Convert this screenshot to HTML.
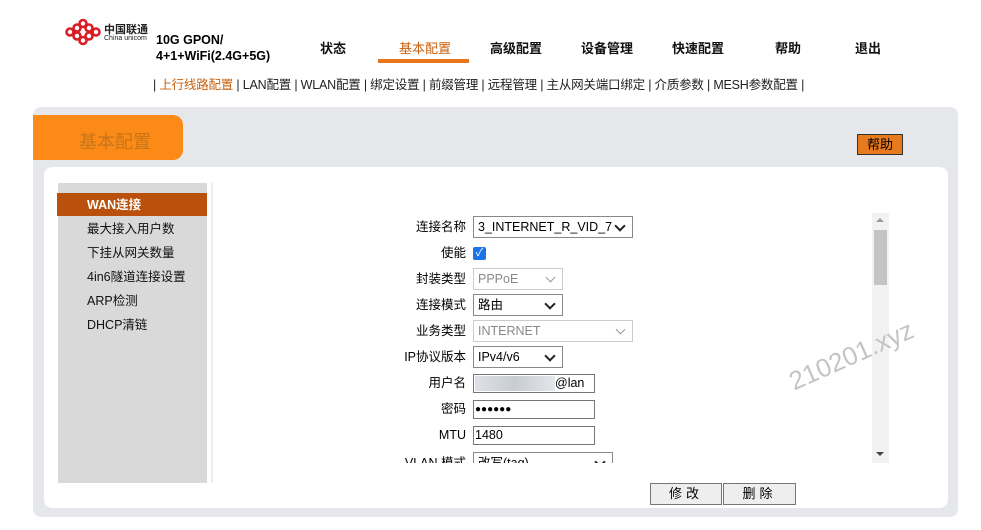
<!DOCTYPE html>
<html><head><meta charset="utf-8"><style>
body{margin:0;width:981px;height:530px;background:#fff;font-family:"Liberation Sans","Noto Sans CJK SC",sans-serif;position:relative;overflow:hidden;font-size:13px;color:#000}
.a{position:absolute}
.nav{top:38px;font-size:13px;font-weight:bold;color:#111}
.sub{top:74px;left:153px;font-size:12.5px;color:#222;white-space:nowrap;letter-spacing:-0.2px}
.lbl{width:120px;text-align:right;font-size:12.5px;line-height:22px;height:22px}
.sel{left:473px;height:22px;border:1px solid #888;box-sizing:border-box;background:#fff;font-size:12.5px;line-height:20px;padding-left:4px}
.sel.dis{border-color:#ccc;color:#888}
.sel:after{content:"";position:absolute;right:8px;top:5px;width:6px;height:6px;border-right:2px solid #222;border-bottom:2px solid #222;transform:rotate(45deg)}
.sel.dis:after{border-color:#999;border-width:1px}
.inp{left:473px;width:122px;height:19px;border:1px solid #777;box-sizing:border-box;font-size:12.5px;line-height:17px;padding-left:1px}
.side{left:87px;font-size:12.5px;color:#111;line-height:16px}
.btn{top:483px;height:22px;width:72px;border:1px solid #777;background:#eee;text-align:center;line-height:20px;font-size:13px;box-sizing:border-box;letter-spacing:4px}
</style></head><body>
<svg class="a" style="left:64px;top:18px" width="38" height="28" viewBox="0 0 38 26"><g fill="none" stroke="#d81e25" stroke-width="2.6"><circle cx="6" cy="13" r="3.5"/><circle cx="32" cy="13" r="3.5"/><circle cx="19" cy="4.5" r="3.5"/><circle cx="19" cy="21.5" r="3.5"/><circle cx="13" cy="9" r="3.5"/><circle cx="25" cy="9" r="3.5"/><circle cx="13" cy="17" r="3.5"/><circle cx="25" cy="17" r="3.5"/></g></svg>
<div class="a" style="left:104px;top:21px;font-size:11px;font-weight:bold;color:#222">中国联通</div>
<div class="a" style="left:104px;top:35px;font-size:7px;color:#222">China unicom</div>
<div class="a" style="left:156px;top:32px;font-size:12.5px;font-weight:bold;line-height:16px">10G GPON/<br>4+1+WiFi(2.4G+5G)</div>
<div class="a nav" style="left:320px">状态</div>
<div class="a nav" style="left:399px;color:#c8610f;font-weight:normal">基本配置</div>
<div class="a" style="left:378px;top:59px;width:91px;height:4px;background:#e8761c"></div>
<div class="a nav" style="left:490px">高级配置</div>
<div class="a nav" style="left:581px">设备管理</div>
<div class="a nav" style="left:672px">快速配置</div>
<div class="a nav" style="left:775px">帮助</div>
<div class="a nav" style="left:855px">退出</div>
<div class="a sub">| <span style="color:#c8610f">上行线路配置</span> | LAN配置 | WLAN配置 | 绑定设置 | 前缀管理 | 远程管理 | 主从网关端口绑定 | 介质参数 | MESH参数配置 |</div>
<div class="a" style="left:33px;top:107px;width:925px;height:410px;background:#e6e7ea;border-radius:8px"></div>
<div class="a" style="left:33px;top:115px;width:150px;height:45px;background:#fb8a16;border-radius:0 10px 10px 0"></div>
<div class="a" style="left:79px;top:128px;font-size:18px;color:#c8751a">基本配置</div>
<div class="a" style="left:857px;top:134px;width:46px;height:21px;background:#e8791c;border:1px solid #333;box-sizing:border-box;text-align:center;line-height:19px;font-size:13px">帮助</div>
<div class="a" style="left:44px;top:167px;width:904px;height:341px;background:#fff;border-radius:8px"></div>
<div class="a" style="left:58px;top:183px;width:149px;height:300px;background:#d9d9d9"></div>
<div class="a" style="left:211px;top:183px;width:2px;height:300px;background:#eee"></div>
<div class="a" style="left:57px;top:193px;width:150px;height:23px;background:#b9500b"></div>
<div class="a side" style="top:197px;color:#fff;font-weight:bold">WAN连接</div>
<div class="a side" style="top:221px">最大接入用户数</div>
<div class="a side" style="top:245px">下挂从网关数量</div>
<div class="a side" style="top:269px">4in6隧道连接设置</div>
<div class="a side" style="top:293px">ARP检测</div>
<div class="a side" style="top:317px">DHCP清链</div>
<div class="a lbl" style="left:346px;top:216px">连接名称</div>
<div class="a sel" style="top:216px;width:160px">3_INTERNET_R_VID_7</div>
<div class="a lbl" style="left:346px;top:242px">使能</div>
<div class="a" style="left:473px;top:247px;width:13px;height:13px;background:#1a73e8;border-radius:2px;color:#fff;font-size:11px;line-height:13px;text-align:center">✓</div>
<div class="a lbl" style="left:346px;top:268px">封装类型</div>
<div class="a sel dis" style="top:268px;width:90px">PPPoE</div>
<div class="a lbl" style="left:346px;top:294px">连接模式</div>
<div class="a sel" style="top:294px;width:90px">路由</div>
<div class="a lbl" style="left:346px;top:320px">业务类型</div>
<div class="a sel dis" style="top:320px;width:160px">INTERNET</div>
<div class="a lbl" style="left:346px;top:346px">IP协议版本</div>
<div class="a sel" style="top:346px;width:90px">IPv4/v6</div>
<div class="a lbl" style="left:346px;top:372px">用户名</div>
<div class="a inp" style="top:374px"><span style="display:inline-block;width:80px;height:15px;background:linear-gradient(90deg,#dde1e6,#c8cdd3,#e3e6ea);vertical-align:middle"></span>@lan</div>
<div class="a lbl" style="left:346px;top:398px">密码</div>
<div class="a inp" style="top:400px;font-size:10px">●●●●●●</div>
<div class="a lbl" style="left:346px;top:424px">MTU</div>
<div class="a inp" style="top:426px">1480</div>
<div class="a" style="left:340px;top:452px;width:300px;height:11px;overflow:hidden">
<div class="a lbl" style="left:6px;top:0px">VLAN 模式</div>
<div class="a sel" style="left:133px;top:0;width:140px">改写(tag)</div>
</div>
<div class="a" style="left:872px;top:213px;width:17px;height:250px;background:#f2f2f2"></div>
<div class="a" style="left:874px;top:230px;width:13px;height:55px;background:#c4c4c4"></div>
<div class="a" style="left:876px;top:218px;width:0;height:0;border:4px solid transparent;border-bottom-color:#999;border-top:0"></div>
<div class="a" style="left:876px;top:452px;width:0;height:0;border:4px solid transparent;border-top-color:#444;border-bottom:0"></div>
<div class="a" style="left:797px;top:366px;font-size:26px;color:#c4c4c4;transform:rotate(-24deg);transform-origin:left bottom;white-space:nowrap">210201.xyz</div>
<div class="a btn" style="left:650px">修改</div>
<div class="a btn" style="left:723px;width:73px">删除</div>
</body></html>
